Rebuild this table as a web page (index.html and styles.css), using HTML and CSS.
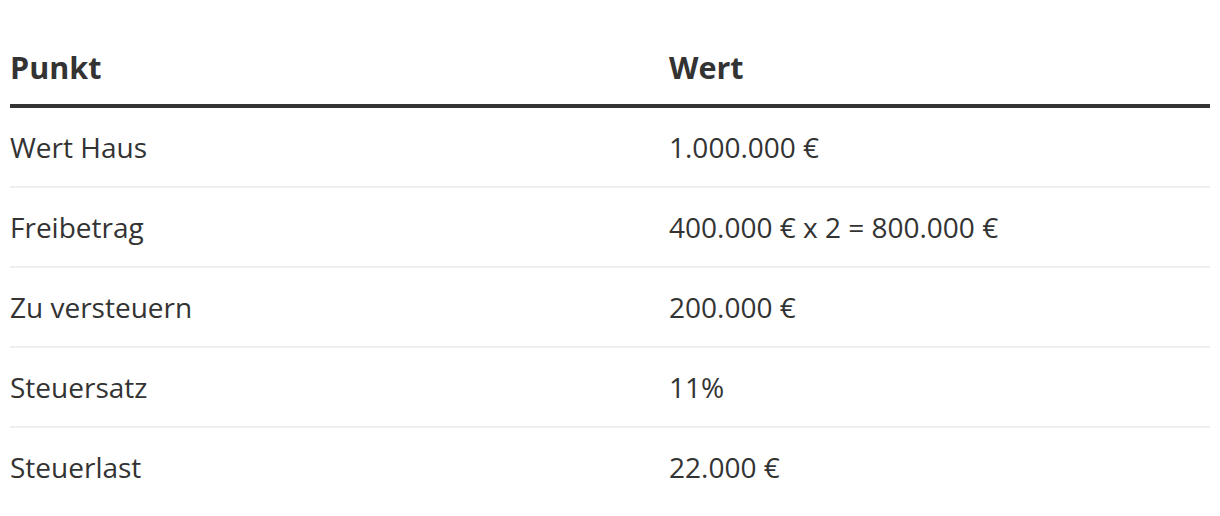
FILE: index.html
```html
<!DOCTYPE html>
<html lang="de">
<head>
<meta charset="utf-8">
<title>Tabelle</title>
<link rel="stylesheet" href="styles.css">
</head>
<body>
<div class="table">
  <div class="row head">
    <div class="cell">Punkt</div>
    <div class="cell">Wert</div>
  </div>
  <div class="row">
    <div class="cell">Wert Haus</div>
    <div class="cell">1.000.000 €</div>
  </div>
  <div class="row">
    <div class="cell">Freibetrag</div>
    <div class="cell">400.000 € x 2 = 800.000 €</div>
  </div>
  <div class="row">
    <div class="cell">Zu versteuern</div>
    <div class="cell">200.000 €</div>
  </div>
  <div class="row">
    <div class="cell">Steuersatz</div>
    <div class="cell">11%</div>
  </div>
  <div class="row last">
    <div class="cell">Steuerlast</div>
    <div class="cell">22.000 €</div>
  </div>
</div>
</body>
</html>
```
FILE: styles.css
```css
html, body {
  margin: 0;
  padding: 0;
  background: #fff;
}
body {
  font-family: "Open Sans", "Liberation Sans", sans-serif;
  color: #333;
  padding: 30px 10px 0 10px;
}
.table {
  width: 1200px;
}
.row {
  display: grid;
  grid-template-columns: 659px 1fr;
  border-bottom: 2px solid #eeeeee;
  font-size: 28px;
  font-weight: 400;
  line-height: 38px;
  padding: 20px 0;
}
.row.head {
  font-weight: 700;
  font-size: 30.5px;
  line-height: 42px;
  padding: 16px 0;
  border-bottom: 4px solid #333;
}
.row.last {
  border-bottom: none;
}
```
